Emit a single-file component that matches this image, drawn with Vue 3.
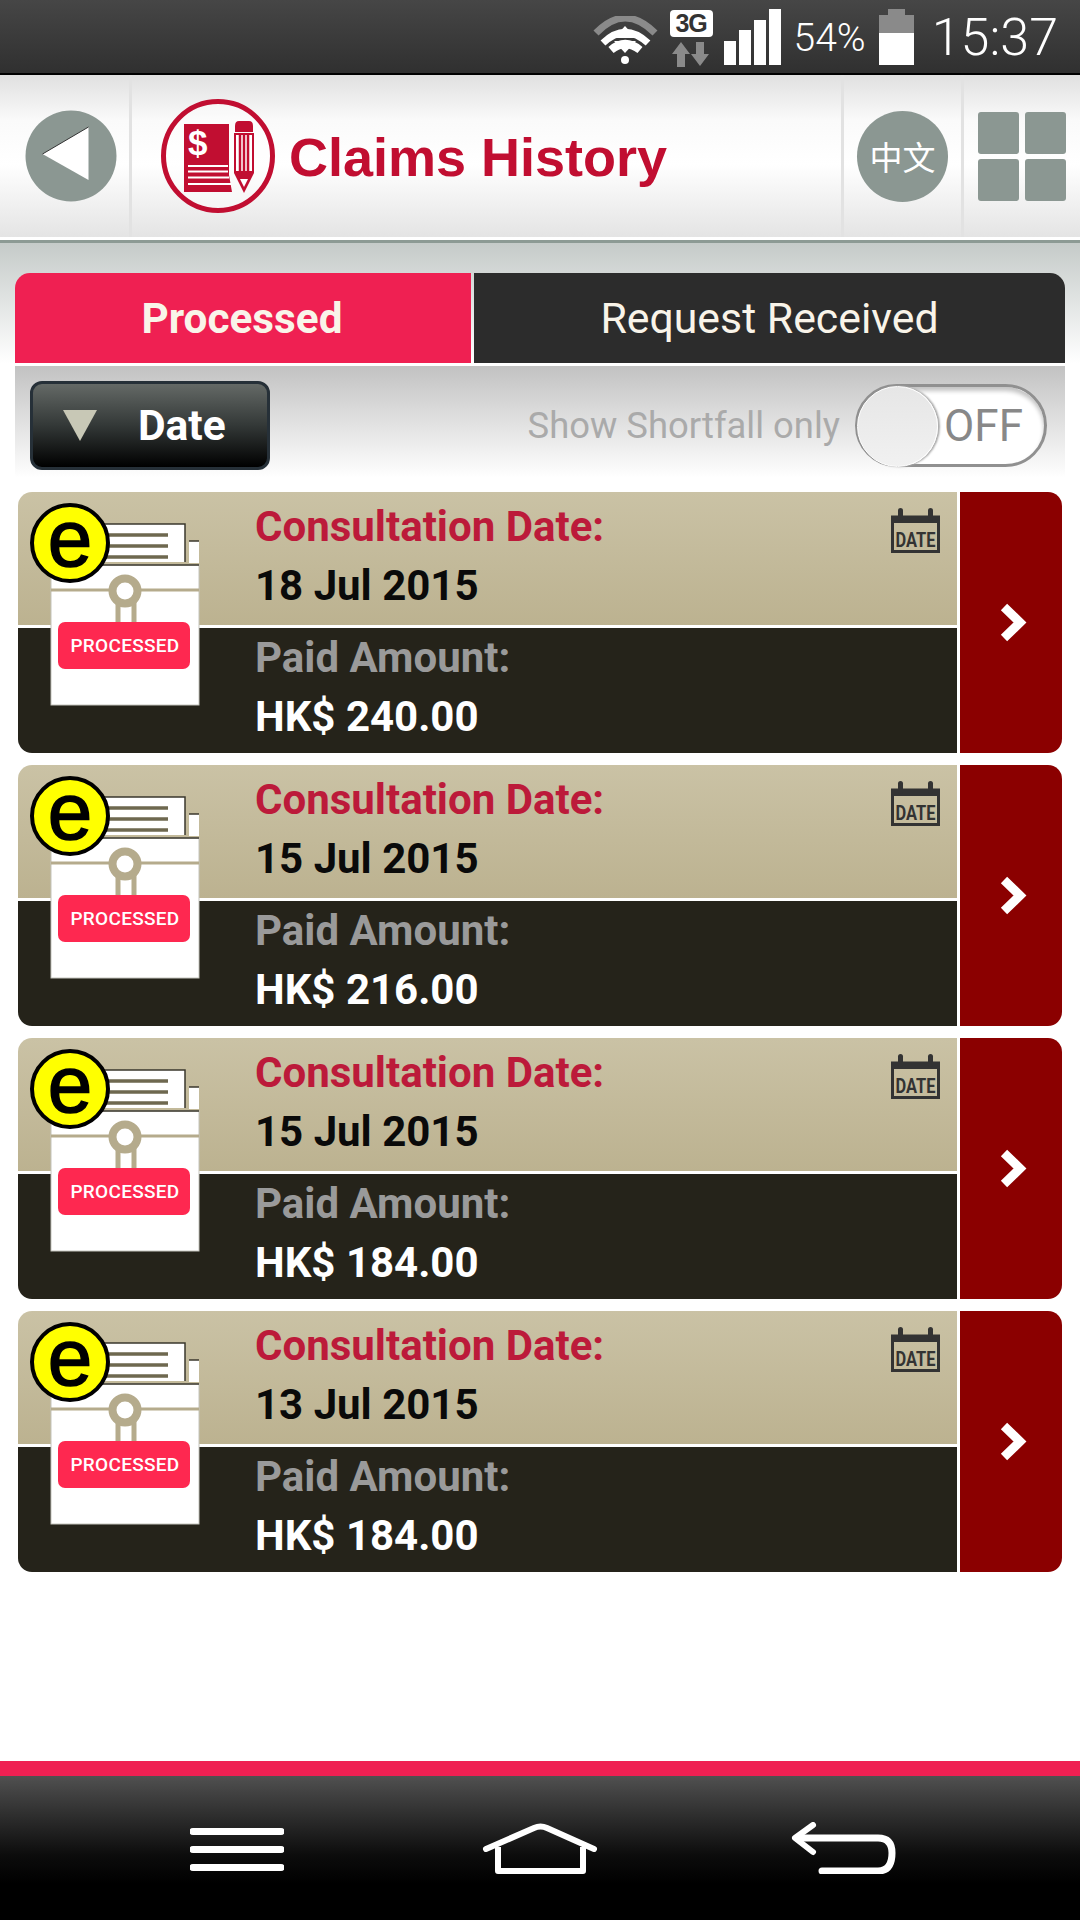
<template>
  <div class="phone">
    <!-- status bar -->
    <div class="status-bar">
      <svg class="st-wifi" width="65" height="48" viewBox="594 16 65 48">
        <path d="M597 33 Q626 3 656 33" fill="none" stroke="#8a8a8a" stroke-width="7" />
        <path d="M604 43 Q626 22 649 43" fill="none" stroke="#fff" stroke-width="7" />
        <path d="M612 50 Q626 38 641 50" fill="none" stroke="#fff" stroke-width="8" />
        <polygon points="626,26 637,38 615,38" fill="#fff" />
        <polygon points="626,53 637,41 615,41" fill="#fff" />
        <circle cx="626" cy="60" r="4" fill="#fff" />
      </svg>
      <div class="st-net">
        <div class="st-3g">3G</div>
        <svg width="38" height="25" viewBox="674 42 38 25">
          <polygon points="683,42 692,54 687,54 687,67 679,67 679,54 674,54" fill="#8a8a8a" />
          <polygon points="702,66 711,54 706,54 706,42 698,42 698,54 693,54" fill="#8a8a8a" />
        </svg>
      </div>
      <div class="st-signal">
        <span class="sig-bar" v-for="h in signalBars" :key="h" :style="{ height: h + 'px' }"></span>
      </div>
      <span class="st-pct">54%</span>
      <div class="st-batt">
        <span class="batt-nub"></span>
        <span class="batt-empty"></span>
        <span class="batt-full"></span>
      </div>
      <span class="st-time">15:37</span>
    </div>

    <!-- header -->
    <div class="header">
      <div class="head-cell back-cell">
        <svg width="92" height="92" viewBox="25.5 111 92 92">
          <circle cx="71.5" cy="157" r="45.5" fill="#8b9792" />
          <polygon points="43,155 89,128 89,181" fill="#fff" />
          <path d="M43 155 L89 128" stroke="#333" stroke-width="1" />
        </svg>
      </div>
      <div class="head-title">
        <svg width="116" height="118" viewBox="160 98 116 118">
          <circle cx="218" cy="157" r="54.5" fill="#fff" fill-opacity="0.4" stroke="#c10e31" stroke-width="5" />
          <path d="M184 125 H229 V176 L232 193 H184 Z" fill="#c10e31" />
          <text x="188" y="156" class="logo-dollar">$</text>
          <path d="M188 167 H228 M188 172.500 H228 M188 178.500 H229 M188 185 H231" stroke="#fff" stroke-width="1.800" />
          <path d="M235 127 Q235 122 239 122 H249 Q253 122 253 127 V133 H235 Z" fill="#c10e31" />
          <path d="M235 135 H253 V173 H235 Z" fill="#fff" stroke="#c10e31" stroke-width="2" />
          <path d="M240 135 V173 M244 135 V173 M248 135 V173" stroke="#c10e31" stroke-width="2.500" />
          <path d="M234 174 H254 L244 194 Z" fill="#c10e31" />
          <path d="M240 180 H248 L244 188 Z" fill="#fff" />
        </svg>
        <h1 class="title">Claims History</h1>
      </div>
      <div class="head-cell lang-cell">
        <div class="lang-btn">中文</div>
      </div>
      <div class="head-cell grid-cell">
        <div class="grid-icon">
          <span v-for="n in 4" :key="n"></span>
        </div>
      </div>
    </div>

    <!-- main -->
    <div class="main">
      <div class="tabs-wrap">
        <div class="tabs">
          <div class="tab active">Processed</div>
          <div class="tab">Request Received</div>
        </div>
      </div>

      <div class="filter-bar">
        <div class="date-btn">
          <span class="date-arrow"></span>
          <span>Date</span>
        </div>
        <div class="shortfall">
          <span class="shortfall-label">Show Shortfall only</span>
          <div class="toggle">
            <span class="toggle-knob"></span>
            <span class="toggle-text">OFF</span>
          </div>
        </div>
      </div>

      <div class="card-list">
        <div class="card" v-for="(c, i) in claims" :key="i">
          <div class="card-body">
            <div class="card-top">
              <div class="label red">Consultation Date:</div>
              <div class="value dark">{{ c.date }}</div>
              <svg class="cal-icon" width="66" height="56" viewBox="889 506 66 56">
                <rect x="892.500" y="517" width="46" height="34.500" fill="none" stroke="#333" stroke-width="3" />
                <rect x="892" y="516" width="47" height="7" fill="#333" />
                <rect x="898" y="508" width="5" height="13" rx="2.500" fill="#333" />
                <rect x="928" y="508" width="5" height="13" rx="2.500" fill="#333" />
                <text x="895.500" y="547" class="cal-text" textLength="40" lengthAdjust="spacingAndGlyphs">DATE</text>
              </svg>
            </div>
            <div class="card-bottom">
              <div class="label grey">Paid Amount:</div>
              <div class="value light">{{ c.amount }}</div>
            </div>
          </div>
          <div class="card-go">
            <svg width="30" height="42" viewBox="998 602 30 42">
              <polyline points="1004,607 1020,622.500 1004,638" fill="none" stroke="#fff" stroke-width="9" />
            </svg>
          </div>
          <!-- badge artwork sits over both halves of the card -->
          <svg class="card-badge" width="210" height="230" viewBox="18 492 210 230">
            <rect x="100" y="524" width="85" height="38" fill="#fff" />
            <path d="M100 524 H185 V562" fill="none" stroke="#3a372c" stroke-width="1.500" />
            <rect x="189" y="541" width="10" height="22" fill="#fff" />
            <path d="M189 541 H199" stroke="#3a372c" stroke-width="1.500" />
            <path d="M105 535 H168 M105 546 H168 M105 557 H168" stroke="#6e684f" stroke-width="3.500" />
            <rect x="51" y="565" width="148" height="140" fill="#fff" stroke="#c4c4bc" stroke-width="1" />
            <path d="M51 565 H199" stroke="#3a372c" stroke-width="1.500" />
            <path d="M51 590 H199" stroke="#b5ab8c" stroke-width="3" />
            <path d="M118 600 V624 M134 600 V624" stroke="#b5ab8c" stroke-width="5" />
            <circle cx="125" cy="591" r="12.500" fill="#fff" stroke="#b5ab8c" stroke-width="8" />
            <rect x="58" y="622" width="132" height="47" rx="7" fill="#fe2850" />
            <text x="125" y="652" class="badge-text">PROCESSED</text>
            <circle cx="70" cy="543" r="38" fill="#ff0" stroke="#000" stroke-width="4" />
            <text x="70" y="566" class="badge-e">e</text>
          </svg>
        </div>
      </div>
    </div>

    <div class="pink-line"></div>

    <!-- soft keys -->
    <div class="nav-bar">
      <svg class="nav-menu" width="94" height="46" viewBox="190 1826 94 46">
        <path d="M193 1831.500 H281 M193 1849.500 H281 M193 1867.500 H281" stroke="#fff" stroke-width="7" stroke-linecap="round" />
      </svg>
      <svg class="nav-home" width="118" height="54" viewBox="481 1822 118 54">
        <path d="M486 1849 L534 1828 Q540.500 1825 547 1828 L594 1849" fill="none" stroke="#fff" stroke-width="6" stroke-linecap="round" />
        <path d="M498 1847 V1871 H583 V1847" fill="none" stroke="#fff" stroke-width="6" stroke-linejoin="round" />
      </svg>
      <svg class="nav-back" width="108" height="52" viewBox="790 1822 108 52">
        <path d="M813 1825 L795 1838 L813 1852" fill="none" stroke="#fff" stroke-width="6" stroke-linecap="round" stroke-linejoin="round" />
        <path d="M797 1838 H878 Q892 1838 892 1853 Q892 1871 878 1871 H822" fill="none" stroke="#fff" stroke-width="7" stroke-linecap="round" />
      </svg>
    </div>
  </div>
</template>

<script setup>
const signalBars = [24, 35, 45, 56]

const claims = [
  { date: '18 Jul 2015', amount: 'HK$ 240.00' },
  { date: '15 Jul 2015', amount: 'HK$ 216.00' },
  { date: '15 Jul 2015', amount: 'HK$ 184.00' },
  { date: '13 Jul 2015', amount: 'HK$ 184.00' }
]
</script>

<style>
body {
  background: #fff;
}
</style>

<style scoped>
.phone {
  width: 1080px;
  height: 1920px;
  display: flex;
  flex-direction: column;
  font-family: Roboto, "Liberation Sans", sans-serif;
  overflow: hidden;
  background: #fff;
}

/* status bar */
.status-bar {
  height: 73px;
  border-bottom: 2px solid #000;
  background: linear-gradient(#464646, #303030);
  display: flex;
  align-items: flex-start;
  justify-content: flex-end;
  padding-right: 22px;
  color: #fff;
}

.st-wifi {
  margin: 16px 12px 0 0;
}

.st-net {
  width: 43px;
  margin: 10px 11px 0 0;
  display: flex;
  flex-direction: column;
  align-items: center;
  gap: 5px;
}

.st-3g {
  width: 43px;
  height: 27px;
  background: #fff;
  border-radius: 4px;
  color: #333;
  font: bold 25px/27px "Liberation Sans", sans-serif;
  letter-spacing: -1px;
  text-align: center;
}

.st-signal {
  height: 56px;
  margin: 9px 13px 0 0;
  display: flex;
  align-items: flex-end;
  gap: 3px;
}

.sig-bar {
  width: 12px;
  background: #fff;
}

.st-pct {
  font-size: 39px;
  font-weight: 300;
  line-height: 77px;
  margin-right: 13px;
}

.st-batt {
  width: 35px;
  margin: 9px 18px 0 0;
  display: flex;
  flex-direction: column;
  align-items: center;
}

.batt-nub {
  width: 17px;
  height: 6px;
  background: #8a8a8a;
}

.batt-empty {
  width: 35px;
  height: 18px;
  background: #8a8a8a;
}

.batt-full {
  width: 35px;
  height: 32px;
  background: #fff;
}

.st-time {
  font-size: 52px;
  font-weight: 300;
  line-height: 75px;
}

/* header */
.header {
  height: 162px;
  display: flex;
  background: linear-gradient(#e0e0e0, #fafafa 28%, #fff 55%, #e4e4e4);
  box-shadow: 0 3px 0 #fff, 0 6px 0 #8c9a94;
  position: relative;
  z-index: 1;
}

.head-cell {
  display: flex;
  align-items: center;
  justify-content: center;
}

.back-cell {
  width: 132px;
  box-sizing: border-box;
  border-right: 3px solid #e2e2e2;
  justify-content: flex-start;
  padding-left: 25px;
}

.head-title {
  flex: 1;
  display: flex;
  align-items: center;
  padding-left: 28px;
}

.logo-dollar {
  font: bold 35px "Liberation Sans", sans-serif;
  fill: #fff;
}

.title {
  margin: 2px 0 0 13px;
  font: bold 54px "Liberation Sans", sans-serif;
  color: #c10e31;
}

.lang-cell {
  width: 120px;
  box-sizing: border-box;
  border-left: 3px solid #e2e2e2;
  padding-right: 3px;
  padding-left: 3px;
}

.lang-btn {
  width: 91px;
  height: 91px;
  border-radius: 50%;
  background: #8b9792;
  color: #fff;
  font: 33px/91px "Noto Sans CJK SC", sans-serif;
  text-align: center;
}

.grid-cell {
  width: 119px;
  box-sizing: border-box;
  border-left: 3px solid #e2e2e2;
  justify-content: flex-start;
  padding-left: 14px;
}

.grid-icon {
  display: grid;
  grid-template-columns: 41px 41px;
  grid-template-rows: 42px 42px;
  column-gap: 6px;
  row-gap: 5px;
}

.grid-icon span {
  background: #8b9792;
  border-radius: 3px;
}

/* tabs */
.main {
  flex: 1;
  display: flex;
  flex-direction: column;
}

.tabs-wrap {
  padding: 36px 15px 0;
  background: linear-gradient(#c2c8c6, #fff);
}

.tabs {
  height: 90px;
  display: flex;
  gap: 3px;
  color: #f9f4e9;
  font-size: 42.8px;
  border-radius: 15px 15px 0 0;
  overflow: hidden;
}

.tab {
  flex: 1;
  background: #2c2c2c;
  display: flex;
  align-items: center;
  justify-content: center;
}

.tab.active {
  flex: 0 0 456px;
  background: #ef2052;
  font-size: 42.3px;
  font-weight: 700;
  padding-right: 2px;
  box-sizing: border-box;
}

/* filter row */
.filter-bar {
  margin: 3px 15px 0;
  height: 112px;
  box-sizing: border-box;
  padding: 15px 15px 0;
  display: flex;
  justify-content: space-between;
  align-items: flex-start;
  background: linear-gradient(#c2c2c2, #fff);
}

.date-btn {
  width: 240px;
  height: 89px;
  box-sizing: border-box;
  border: 3px solid #263038;
  border-radius: 12px;
  background: linear-gradient(#646966, #333837 50%, #000);
  color: #fff;
  font-size: 42.5px;
  font-weight: 700;
  display: flex;
  align-items: center;
}

.date-arrow {
  width: 0;
  height: 0;
  margin: 0 41px 0 30px;
  border-left: 17px solid transparent;
  border-right: 17px solid transparent;
  border-top: 31px solid #c8c8b6;
}

.shortfall {
  display: flex;
  align-items: center;
  margin-right: 3px;
  padding-top: 3px;
}

.shortfall-label {
  font-size: 36.4px;
  color: #aaa;
  margin-right: 15px;
}

.toggle {
  width: 192px;
  height: 83px;
  box-sizing: border-box;
  border: 3px solid #909090;
  border-radius: 42px;
  background: #fff;
  box-shadow: inset 0 4px 4px #c4c4c4;
  position: relative;
  display: flex;
  align-items: center;
  justify-content: flex-end;
  padding-right: 21px;
}

.toggle-knob {
  position: absolute;
  left: -1px;
  top: -1px;
  width: 79px;
  height: 79px;
  border-radius: 50%;
  background: linear-gradient(#e6e6e6, #f1f1f1);
  border: 1px solid #fff;
  box-shadow: 2px 0 2px #aaa;
}

.toggle-text {
  font-size: 44px;
  color: #888;
}

/* claim cards */
.card-list {
  padding: 14px 18px 0;
  display: flex;
  flex-direction: column;
  gap: 12px;
}

.card {
  height: 261px;
  display: flex;
  gap: 3px;
  position: relative;
}

.card-body {
  flex: 1;
  display: flex;
  flex-direction: column;
  gap: 3px;
  border-radius: 14px 0 0 14px;
  overflow: hidden;
}

.card-top,
.card-bottom {
  padding-left: 237px;
  box-sizing: border-box;
  position: relative;
}

.card-top {
  height: 133px;
  background: linear-gradient(#cac2a5, #bcb290);
  padding-top: 5px;
}

.card-bottom {
  height: 125px;
  background: #25231a;
}

.label,
.value {
  font-size: 42px;
  font-weight: 700;
  line-height: 59px;
}

.red {
  color: #bc1a3a;
}

.grey {
  color: #9a9a9a;
}

.dark {
  color: #0a0a0a;
}

.light {
  color: #fff;
}

.cal-icon {
  position: absolute;
  top: 14px;
  right: 2px;
}

.cal-text {
  font: 700 21px Roboto, sans-serif;
  fill: #333;
}

.card-go {
  width: 102px;
  background: #8b0000;
  border-radius: 0 14px 14px 0;
  display: flex;
  align-items: center;
  justify-content: center;
  padding-left: 3px;
  box-sizing: border-box;
}

.card-badge {
  position: absolute;
  left: 0;
  top: 0;
}

.badge-text {
  font: 500 19px Roboto, sans-serif;
  letter-spacing: 0.3px;
  fill: #fff;
  text-anchor: middle;
}

.badge-e {
  font: 80px "Liberation Sans", sans-serif;
  fill: #000;
  stroke: #000;
  stroke-width: 1.5px;
  text-anchor: middle;
}

/* bottom */
.pink-line {
  height: 15px;
  background: #ef2052;
}

.nav-bar {
  height: 144px;
  background: linear-gradient(#505050, #0c0c0c 55%, #000 75%);
  display: flex;
  align-items: flex-start;
}

.nav-menu {
  margin: 50px 0 0 190px;
}

.nav-home {
  margin: 46px 0 0 197px;
}

.nav-back {
  margin: 46px 0 0 191px;
}
</style>
